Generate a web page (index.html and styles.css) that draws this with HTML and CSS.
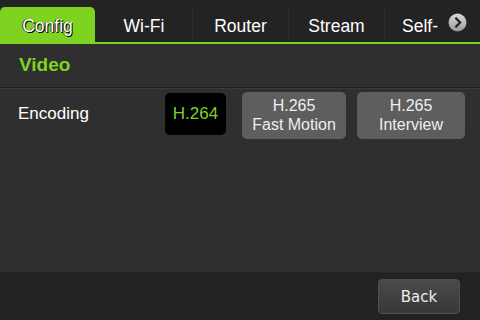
FILE: index.html
```html
<!DOCTYPE html>
<html lang="en">
<head>
    <meta charset="UTF-8">
    <meta name="viewport" content="width=device-width, initial-scale=1.0">
    <title>Config</title>
    <link rel="stylesheet" href="styles.css">
</head>
<body>
    <div class="screen">
        <div class="tabs">
            <div class="tab active">Config</div>
            <div class="tab">Wi-Fi</div>
            <div class="tab sep">Router</div>
            <div class="tab sep">Stream</div>
            <div class="tab sep last">Self-</div>
            <div class="more">
                <svg width="19" height="19" viewBox="0 0 18 18">
                    <defs>
                        <linearGradient id="g" x1="0" y1="0" x2="0" y2="1">
                            <stop offset="0" stop-color="#d8d8d8"/>
                            <stop offset="1" stop-color="#9a9a9a"/>
                        </linearGradient>
                    </defs>
                    <circle cx="9" cy="9" r="8.5" fill="url(#g)"/>
                    <path d="M7 4.5 L11.5 9 L7 13.5" fill="none" stroke="#1c1c1c" stroke-width="2"/>
                </svg>
            </div>
        </div>

        <div class="content">
            <div class="section">Video</div>
            <div class="row">
                <div class="label">Encoding</div>
                <div class="options">
                    <div class="opt selected">H.264</div>
                    <div class="opt wide">H.265<br>Fast Motion</div>
                    <div class="opt wide">H.265<br>Interview</div>
                </div>
            </div>
        </div>

        <div class="footer">
            <div class="back">Back</div>
        </div>
    </div>
</body>
</html>
```

FILE: styles.css
```css
body {
    margin: 0;
    background: #2f2f2f;
    font-family: "Liberation Sans", Arial, sans-serif;
    color: #fff;
}

.screen {
    display: flex;
    flex-direction: column;
    width: 480px;
    height: 320px;
    overflow: hidden;
}

.tabs {
    position: relative;
    display: flex;
    align-items: flex-end;
    height: 42px;
    background: #232323;
    border-bottom: 2px solid #7ed321;
}

.tab {
    width: 96px;
    height: 35px;
    line-height: 38px;
    text-align: center;
    font-size: 17.5px;
    flex-shrink: 0;
    box-sizing: border-box;
}

.tab.sep {
    border-left: 1px solid #2c2c2c;
}

.tab.last {
    text-align: left;
    padding-left: 17px;
}

.tab.active {
    width: 95px;
    margin-right: 1px;
    background: #7ed321;
    border-radius: 5px 5px 0 0;
    text-shadow: 1px 1px 0 #000, -1px 0 0 #333;
}

.more {
    position: absolute;
    right: 13px;
    top: 13px;
    width: 19px;
    height: 19px;
}

.more svg {
    display: block;
}

.content {
    flex: 1;
    background: #2f2f2f;
}

.section {
    height: 43px;
    line-height: 42px;
    padding-left: 19px;
    font-size: 19px;
    font-weight: bold;
    color: #7ed321;
    border-bottom: 1px solid #1f1f1f;
    box-shadow: 0 1px 0 #3a3a3a;
}

.row {
    display: flex;
    align-items: flex-start;
    padding: 4px 15px 0 18px;
}

.label {
    width: 147px;
    font-size: 17px;
    line-height: 17px;
    margin-top: 13px;
}

.options {
    display: flex;
    align-items: flex-start;
}

.opt {
    width: 61px;
    height: 42px;
    margin-top: 1px;
    line-height: 42px;
    text-align: center;
    font-size: 17px;
    background: #000;
    color: #7ed321;
    border-radius: 5px;
}

.opt.wide {
    width: 104px;
    height: 47px;
    margin-top: 0;
    margin-left: 16px;
    padding-top: 4px;
    box-sizing: border-box;
    line-height: 19px;
    font-size: 16px;
    background: #5e5e5e;
    color: #eee;
}

.opt.wide + .opt.wide {
    width: 108px;
    margin-left: 11px;
}

.footer {
    display: flex;
    justify-content: flex-end;
    height: 48px;
    padding: 6px 20px 0 0;
    box-sizing: border-box;
    background: #222;
    border-top: 1px solid #262626;
}

.back {
    width: 82px;
    height: 35px;
    line-height: 35px;
    text-align: center;
    font-family: "DejaVu Sans", sans-serif;
    font-size: 15px;
    color: #eee;
    background: linear-gradient(#4a4a4a, #383838);
    border: 1px solid #505050;
    border-radius: 4px;
    box-sizing: border-box;
}
```
